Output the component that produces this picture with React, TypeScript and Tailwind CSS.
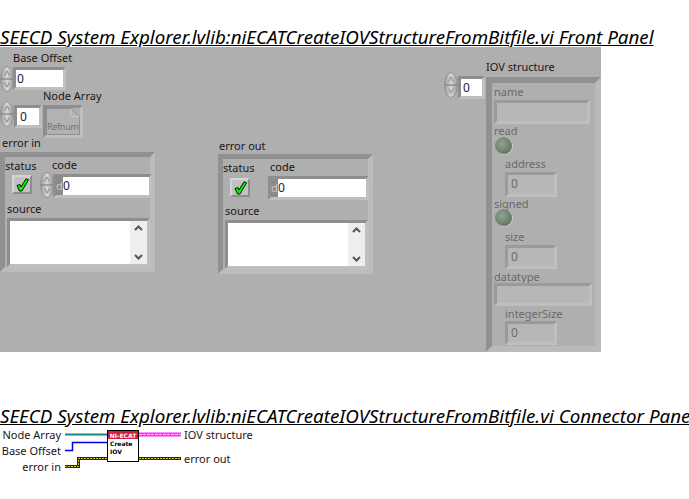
const sunken = "border-[3px] border-t-[#8e8e8e] border-l-[#8e8e8e] border-r-[#bfbfbf] border-b-[#bfbfbf]";
const numeric = "bg-white text-[#15213f] text-[12px] leading-[17px]";
const labelText = "block whitespace-nowrap text-[#1c1414] leading-none";

function Spinner() {
  return (
    <svg className="shrink-0" width="14" height="26" viewBox="0 0 14 26">
      <defs>
        <linearGradient id="spin">
          <stop offset="0" stopColor="#9a9a9a" />
          <stop offset="0.5" stopColor="#d6d6d6" />
          <stop offset="1" stopColor="#9a9a9a" />
        </linearGradient>
      </defs>
      <ellipse cx="7" cy="13" rx="6.5" ry="12.5" fill="url(#spin)" stroke="#939393" />
      <path d="M1 13H13" stroke="#777" />
      <path d="M4.5 9.5L7 5L9.5 9.5" fill="none" stroke="#8a8a8a" />
      <path d="M4.5 16.5L7 21L9.5 16.5" fill="none" stroke="#8a8a8a" />
    </svg>
  );
}

function Check({ className }: { className: string }) {
  return (
    <div className={`flex items-center justify-center w-[20px] h-[19px] ml-[7px] bg-[#c2c2c2] border-2 border-t-[#d4d4d4] border-l-[#d4d4d4] border-r-[#8c8c8c] border-b-[#8c8c8c] ${className}`}>
      <svg width="13" height="14" viewBox="0 0 13 14">
        <path d="M1 7.5L4 6.5L5 9L10 0.8L12.5 1.8L6 13H3.5Z" fill="#00f400" stroke="#000" strokeWidth="0.9" />
      </svg>
    </div>
  );
}

function Led() {
  return (
    <div className="rounded-full w-[18px] h-[18px] ml-[1px] bg-[radial-gradient(circle_at_40%_40%,#8fa08f,#566b56)] border-b border-r border-[#c8c8c8]" />
  );
}

function Scrollbar() {
  return (
    <div className="absolute right-0 top-0 bottom-0 w-[17px] bg-[#eeeeee] flex flex-col items-center justify-between py-[4px]">
      <svg width="9" height="6" viewBox="0 0 9 6"><path d="M1 5L4.5 1.5L8 5" fill="none" stroke="#555" strokeWidth="2" /></svg>
      <svg width="9" height="6" viewBox="0 0 9 6"><path d="M1 1L4.5 4.5L8 1" fill="none" stroke="#555" strokeWidth="2" /></svg>
    </div>
  );
}

function ErrorCluster({ label, className, labelClass, spinner }: { label: string; className: string; labelClass: string; spinner?: boolean }) {
  return (
    <div className={`absolute ${className}`}>
      <span className={`${labelText} ${labelClass}`}>{label}</span>
      <div className="flex flex-col w-[155px] h-[120px] border-[5px] border-t-[#919191] border-l-[#919191] border-r-[#bcbcbc] border-b-[#bcbcbc]">
        <div className="flex">
          <div className="w-[35px] shrink-0">
            <span className={`${labelText} h-[15px] pt-[3px]`}>status</span>
            <Check className={spinner ? "mt-[3px]" : "mt-[4px]"} />
          </div>
          <div>
            <span className={`${labelText} h-[15px] pt-[2px] ml-[12px]`}>code</span>
            <div className="flex items-start h-[26px]">
              {spinner ? <Spinner /> : <div className="w-[11px] shrink-0" />}
              <div className={`${sunken} flex mt-[2px] -ml-[1px] h-[24px] ${spinner ? "w-[99px]" : "w-[101px]"}`}>
                <span className="w-[7px] bg-[#8a8a8a] text-[#c8c8c8] text-[11px] leading-[17px]">d</span>
                <span className={`flex-1 ${numeric}`}>0</span>
              </div>
            </div>
          </div>
        </div>
        <span className={`${labelText} pt-[5px] ml-[2px] ${spinner ? "h-[20px]" : "h-[21px]"}`}>source</span>
        <div className={`${sunken} ml-[2px] w-[143px] h-[50px]`}>
          <div className="relative h-full bg-white"><Scrollbar /></div>
        </div>
      </div>
    </div>
  );
}

function Dim({ children, className }: { children: string; className: string }) {
  return <span className={`flex items-center whitespace-nowrap text-[#6a6a6a] leading-none ${className}`}>{children}</span>;
}

function Field({ className, value }: { className: string; value?: string }) {
  return (
    <div className={`border-[3px] border-t-[#9a9a9a] border-l-[#9a9a9a] border-r-[#bfbfbf] border-b-[#bfbfbf] bg-[#b7b7b7] text-[#6a6a6a] text-[12px] leading-[18px] pl-[3px] ${className}`}>{value}</div>
  );
}

function Connector() {
  return (
    <svg className="shrink-0" width="123" height="50" viewBox="61 0 123 50">
      <path d="M65 7.5H107" stroke="#17887f" strokeWidth="2" />
      <path d="M65 23.5H72.5V15.5H107" fill="none" stroke="#0000e0" strokeWidth="1.5" />
      <path d="M65 39.5H78.5V31.5H107" fill="none" stroke="#2c2c00" strokeWidth="3" />
      <path d="M65 39.5H78.5V31.5H107" fill="none" stroke="#d8c820" strokeWidth="1" strokeDasharray="2 1" />
      <path d="M139 7.5H181" stroke="#ff2cf0" strokeWidth="4" />
      <path d="M139 7.5H181" stroke="#ffd0fa" strokeWidth="1" strokeDasharray="3 1" />
      <path d="M139 31.5H181" stroke="#2c2c00" strokeWidth="3" />
      <path d="M139 31.5H181" stroke="#d8c820" strokeWidth="1" strokeDasharray="2 1" />
      <rect x="107.5" y="3.5" width="31" height="31" fill="#fff" stroke="#000" />
      <rect x="108" y="4" width="30" height="8" fill="#d01c40" />
      <text x="123" y="10.5" textAnchor="middle" fontSize="6" fontWeight="700" fill="#fff" fontFamily="DejaVu Sans">NI-ECAT</text>
      <text x="110" y="18.5" fontSize="6" fontWeight="700" fill="#000" fontFamily="DejaVu Sans">Create</text>
      <text x="110" y="26.5" fontSize="6" fontWeight="700" fill="#000" fontFamily="DejaVu Sans">IOV</text>
    </svg>
  );
}

export default function App() {
  return (
    <div className="w-[689px] h-[499px] bg-white overflow-hidden font-['Noto_Sans',sans-serif] text-[11px]">
      <h1 className="h-[47px] pt-[25px] text-[18.75px] leading-[24px] italic underline whitespace-nowrap text-black">
        SEECD System Explorer.lvlib:niECATCreateIOVStructureFromBitfile.vi Front Panel
      </h1>

      {/* front panel canvas, each control group sits where LabVIEW placed it */}
      <div className="relative w-[601px] h-[305px] bg-[#afafaf]">
        <div className="absolute left-0 top-[5px]">
          <span className={`${labelText} h-[14px] ml-[13px]`}>Base Offset</span>
          <div className="flex items-start">
            <Spinner />
            <div className={`${sunken} ${numeric} w-[53px] h-[23px] mt-[1px] -ml-[1px] pl-[1px]`}>0</div>
          </div>
        </div>

        <div className="absolute left-0 top-[43px] flex items-start">
          <div className="mt-[11px]"><Spinner /></div>
          <div className={`${sunken} ${numeric} w-[28px] h-[23px] mt-[15px] pl-[3px]`}>0</div>
          <div className="ml-[1px]">
            <span className={`${labelText} h-[15px]`}>Node Array</span>
            <div className={`${sunken} relative w-[40px] h-[33px]`}>
              <svg className="absolute left-0 top-0" width="34" height="27" viewBox="0 0 34 27">
                <path d="M0.5 0.5H25L33.5 8.5V26.5H0.5Z" fill="#b2b2b2" stroke="#8f8f8f" />
                <path d="M25 0.5V8.5H33.5" fill="none" stroke="#c8c8c8" />
              </svg>
              <span className="absolute left-[1px] top-[13px] text-[9px] leading-[11px] tracking-[-0.3px] text-[#727272]">Refnum</span>
            </div>
          </div>
        </div>

        <ErrorCluster label="error in" className="left-0 top-[90px]" labelClass="h-[15px] ml-[2px]" spinner />
        <ErrorCluster label="error out" className="left-[218px] top-[93px]" labelClass="h-[14px] ml-[1px]" />

        <div className="absolute left-[444px] top-[14px] flex items-start">
          <div className="mt-[11px]"><Spinner /></div>
          <div className={`${sunken} ${numeric} w-[27px] h-[23px] mt-[15px] pl-[2px]`}>0</div>
          <div className="ml-[1px]">
            <span className={`${labelText} h-[16px]`}>IOV structure</span>
            <div className="flex flex-col w-[115px] h-[275px] pl-[2px] border-[6px] border-t-[#919191] border-l-[#919191] border-r-[#bababa] border-b-[#bababa]">
              <Dim className="h-[17px]">name</Dim>
              <Field className="w-[96px] h-[24px]" />
              <Dim className="h-[13px]">read</Dim>
              <Led />
              <Dim className="h-[17px] ml-[11px]">address</Dim>
              <Field className="w-[52px] h-[25px] ml-[11px]" value="0" />
              <Dim className="h-[12px]">signed</Dim>
              <Led />
              <Dim className="h-[18px] ml-[11px]">size</Dim>
              <Field className="w-[52px] h-[24px] ml-[11px]" value="0" />
              <Dim className="h-[14px]">datatype</Dim>
              <Field className="w-[98px] h-[23px]" />
              <Dim className="h-[15px] ml-[11px]">integerSize</Dim>
              <Field className="w-[52px] h-[24px] ml-[11px]" value="0" />
            </div>
          </div>
        </div>
      </div>

      <h2 className="h-[75px] pt-[52px] text-[18.75px] leading-[24px] italic underline whitespace-nowrap text-black">
        SEECD System Explorer.lvlib:niECATCreateIOVStructureFromBitfile.vi Connector Pane
      </h2>

      <div className="flex h-[50px]">
        <div className="w-[61px] flex flex-col items-end [&>span]:h-[16px] [&>span]:flex [&>span]:items-center [&>span]:whitespace-nowrap [&>span]:text-[#1c1414]">
          <span>Node Array</span>
          <span>Base Offset</span>
          <span>error in</span>
        </div>
        <Connector />
        <div className="flex flex-col gap-[8px] [&>span]:h-[16px] [&>span]:flex [&>span]:items-center [&>span]:whitespace-nowrap [&>span]:text-[#1c1414]">
          <span>IOV structure</span>
          <span>error out</span>
        </div>
      </div>
    </div>
  );
}
